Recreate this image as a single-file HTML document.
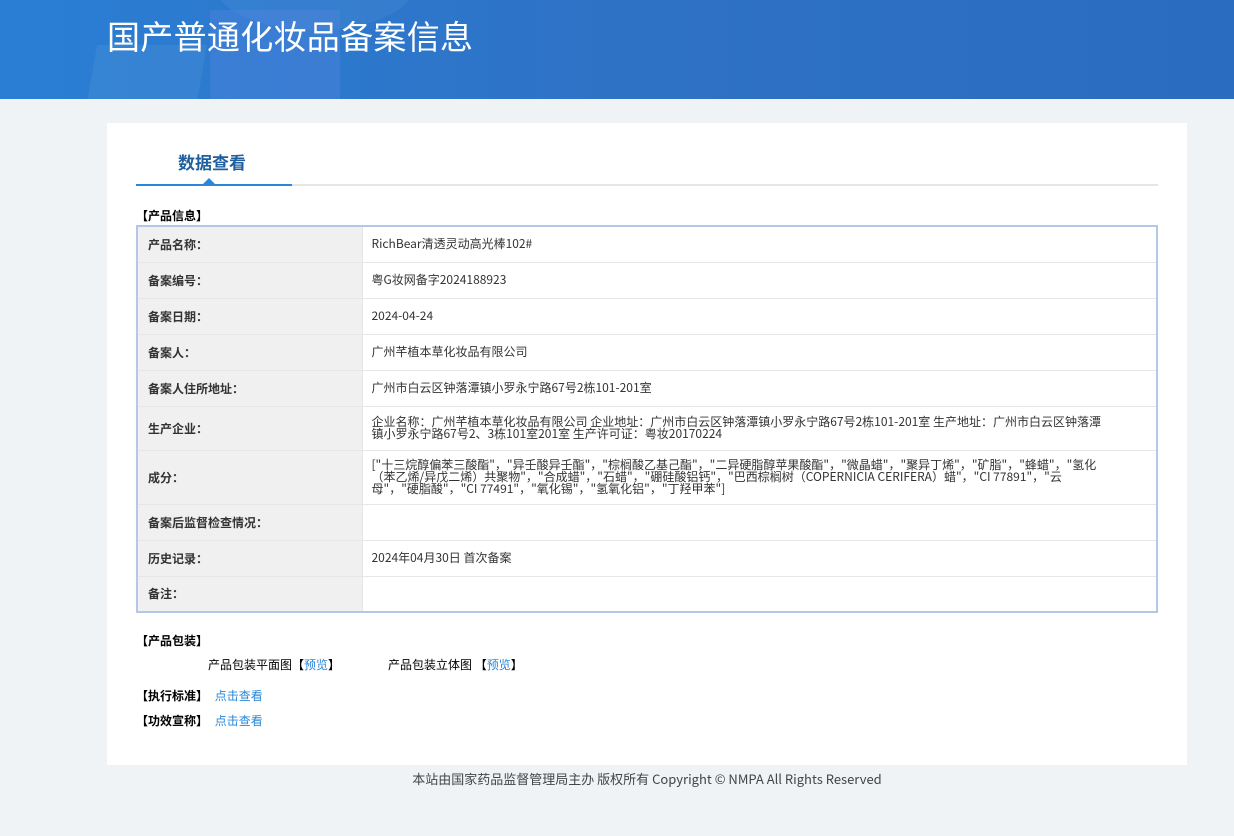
<!DOCTYPE html>
<html><head><meta charset="utf-8"><style>
*{margin:0;padding:0;box-sizing:border-box}
body{width:1234px;height:836px;background:#eff3f6;font-family:"Liberation Sans","Noto Sans CJK SC",sans-serif;color:#333;position:relative;overflow:hidden}
.hd{position:absolute;left:0;top:0;width:1234px;height:99px;background:linear-gradient(90deg,#2a7fd4 0%,#2e72c6 50%,#2a6cc0 100%);overflow:hidden}
.hd .s1{position:absolute;left:90px;top:45px;width:110px;height:80px;background:rgba(255,255,255,.06);transform:skewX(-10deg)}
.hd .s2{position:absolute;left:210px;top:10px;width:130px;height:120px;background:rgba(100,140,230,.25)}
.hd .s3{position:absolute;left:215px;top:-60px;width:200px;height:90px;border-radius:50%;background:rgba(255,255,255,.05)}
.hd h1{position:absolute;left:107px;top:11px;font-size:33px;font-weight:normal;color:#fff;letter-spacing:0.3px;font-family:"Noto Sans CJK SC",sans-serif}
.panel{position:absolute;left:107px;top:123px;width:1080px;height:642px;background:#fff}
.tab{position:absolute;left:27px;top:26px;width:156px;text-align:center;font-size:17px;font-weight:bold;color:#1e5f9e;font-family:"Noto Sans CJK SC",sans-serif}
.line{position:absolute;left:29px;top:61px;width:1022px;height:2px;background:#e6e6e6}
.line b{position:absolute;left:0;top:0;width:156px;height:2px;background:#2a87d8}
.tri{position:absolute;left:96px;top:55px;width:0;height:0;border-left:6px solid transparent;border-right:6px solid transparent;border-bottom:6px solid #2a87d8}
.sec{position:absolute;font-size:12px;font-weight:bold;color:#000;font-family:"Noto Sans CJK SC",sans-serif}
table{position:absolute;left:29px;top:102px;width:1022px;border-collapse:collapse;border:2px solid #b5c7e6;font-size:12px;font-family:"Noto Sans CJK SC",sans-serif}
td{border-bottom:1px solid #e6e6e6;vertical-align:middle}
td.l{width:225px;background:#f0f0f0;font-weight:bold;padding-left:10px;color:#333;border-right:1px solid #e6e6e6}
td.v{padding:0 48px 0 9px;color:#333;line-height:12px;font-size:12px}
.t{position:absolute;font-size:12px;color:#000;font-family:"Noto Sans CJK SC",sans-serif}
a{color:#2a87d8;text-decoration:none}
.ft{position:absolute;top:769px;left:0;width:1294px;text-align:center;font-size:13px;color:#444;font-family:"Noto Sans CJK SC",sans-serif}
</style></head><body>
<div class="hd"><div class="s3"></div><div class="s2"></div><div class="s1"></div><h1>国产普通化妆品备案信息</h1></div>
<div class="panel">
<div class="tab">数据查看</div>
<div class="line"><b></b></div><div class="tri"></div>
<div class="sec" style="left:29px;top:84px">【产品信息】</div>
<table>
<tr style="height:36px"><td class="l">产品名称：</td><td class="v">RichBear清透灵动高光棒102#</td></tr>
<tr style="height:36px"><td class="l">备案编号：</td><td class="v">粤G妆网备字2024188923</td></tr>
<tr style="height:36px"><td class="l">备案日期：</td><td class="v">2024-04-24</td></tr>
<tr style="height:36px"><td class="l">备案人：</td><td class="v">广州芊植本草化妆品有限公司</td></tr>
<tr style="height:36px"><td class="l">备案人住所地址：</td><td class="v">广州市白云区钟落潭镇小罗永宁路67号2栋101-201室</td></tr>
<tr style="height:44px"><td class="l">生产企业：</td><td class="v">企业名称：广州芊植本草化妆品有限公司 企业地址：广州市白云区钟落潭镇小罗永宁路67号2栋101-201室 生产地址：广州市白云区钟落潭镇小罗永宁路67号2、3栋101室201室 生产许可证：粤妆20170224</td></tr>
<tr style="height:54px"><td class="l">成分：</td><td class="v">["十三烷醇偏苯三酸酯"，"异壬酸异壬酯"，"棕榈酸乙基己酯"，"二异硬脂醇苹果酸酯"，"微晶蜡"，"聚异丁烯"，"矿脂"，"蜂蜡"，"氢化（苯乙烯/异戊二烯）共聚物"，"合成蜡"，"石蜡"，"硼硅酸铝钙"，"巴西棕榈树（COPERNICIA CERIFERA）蜡"，"CI 77891"，"云母"，"硬脂酸"，"CI 77491"，"氧化锡"，"氢氧化铝"，"丁羟甲苯"]</td></tr>
<tr style="height:36px"><td class="l">备案后监督检查情况：</td><td class="v"></td></tr>
<tr style="height:36px"><td class="l">历史记录：</td><td class="v">2024年04月30日 首次备案</td></tr>
<tr style="height:36px"><td class="l">备注：</td><td class="v"></td></tr>
</table>
<div class="sec" style="left:29px;top:509px">【产品包装】</div>
<div class="t" style="left:101px;top:533px">产品包装平面图【<a>预览</a>】</div>
<div class="t" style="left:281px;top:533px">产品包装立体图 【<a>预览</a>】</div>
<div class="sec" style="left:29px;top:564px">【执行标准】 <a style="font-weight:normal;margin-left:4px">点击查看</a></div>
<div class="sec" style="left:29px;top:589px">【功效宣称】 <a style="font-weight:normal;margin-left:4px">点击查看</a></div>
</div>
<div class="ft">本站由国家药品监督管理局主办 版权所有 Copyright © NMPA All Rights Reserved</div>
</body></html>
